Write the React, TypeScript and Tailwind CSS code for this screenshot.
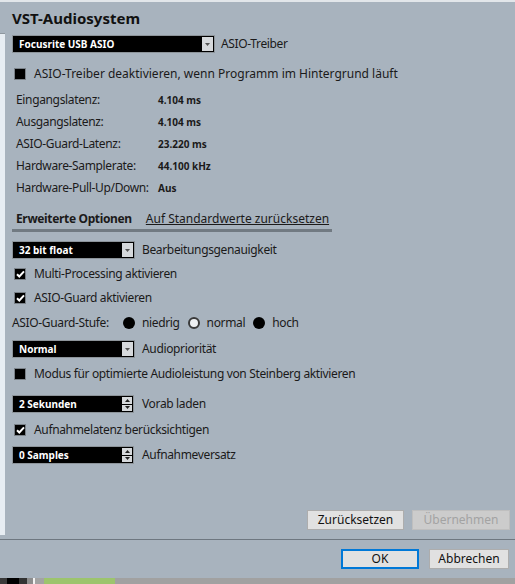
import React from "react";

const font = { fontFamily: '"Noto Sans", "Open Sans", sans-serif' };

function Dropdown({ value, width }: { value: string; width: string }) {
  return (
    <div
      className={`flex h-[18px] ${width} items-stretch border border-[#8d949a] bg-black`}
    >
      <span className="flex flex-1 items-center pl-[6px] text-[10px] font-bold tracking-normal text-white">
        {value}
      </span>
      <span className="my-[1px] mr-[1px] flex w-[11px] items-center justify-center bg-[#d6d9dc]">
        <svg width="5" height="3" viewBox="0 0 5 3">
          <path d="M0 0h5L2.5 3z" fill="#555" />
        </svg>
      </span>
    </div>
  );
}

function Spinbox({ value }: { value: string }) {
  return (
    <div className="flex h-[18px] w-[122px] items-stretch border border-[#8d949a] bg-black">
      <span className="flex flex-1 items-center pl-[6px] text-[10px] font-bold tracking-normal text-white">
        {value}
      </span>
      <span className="my-[1px] mr-[1px] flex w-[10px] flex-col gap-[1px]">
        <span className="flex flex-1 items-center justify-center bg-[#d6d9dc]">
          <svg width="5" height="3" viewBox="0 0 5 3">
            <path d="M0 3h5L2.5 0z" fill="#222" />
          </svg>
        </span>
        <span className="flex flex-1 items-center justify-center bg-[#d6d9dc]">
          <svg width="5" height="3" viewBox="0 0 5 3">
            <path d="M0 0h5L2.5 3z" fill="#222" />
          </svg>
        </span>
      </span>
    </div>
  );
}

function Checkbox({
  checked,
  label,
  wide,
}: {
  checked?: boolean;
  label: string;
  wide?: boolean;
}) {
  return (
    <div className="flex h-[24px] items-center pl-[2px]">
      <span className="flex h-[12px] w-[12px] items-center justify-center border border-[#7a8188] bg-black">
        {checked && (
          <svg width="9" height="8" viewBox="0 0 9 8">
            <path d="M1 4.2l2.3 2.3L8 1.3" stroke="#fff" strokeWidth="2" fill="none" />
          </svg>
        )}
      </span>
      <span className={`ml-[8px] whitespace-nowrap ${wide ? "tracking-normal" : ""}`}>
        {label}
      </span>
    </div>
  );
}

function Radio({ on, label }: { on?: boolean; label: string }) {
  return (
    <span className="flex items-center">
      <span
        className={`h-[12px] w-[12px] rounded-full ${
          on ? "border-[2px] border-[#3a3a3a] bg-[#eef0f2]" : "bg-black"
        }`}
      />
      <span className="ml-[7px]">{label}</span>
    </span>
  );
}

function InfoRow({ label, value }: { label: string; value: string }) {
  return (
    <div className="flex h-[22px] items-center pl-[4px]">
      <span className="w-[142px] whitespace-nowrap">{label}</span>
      <span className="text-[10px] font-bold tracking-normal">{value}</span>
    </div>
  );
}

function Button({
  children,
  width,
  disabled,
  primary,
}: {
  children: React.ReactNode;
  width: string;
  disabled?: boolean;
  primary?: boolean;
}) {
  return (
    <button
      className={`flex h-[20px] ${width} items-center justify-center text-[12px] tracking-normal ${
        disabled
          ? "border border-[#bfbfbf] bg-[#cccccc] text-[#a3a3a3]"
          : primary
            ? "border-2 border-[#0078d7] bg-[#e1e1e1] text-[#111]"
            : "border border-[#adadad] bg-[#e1e1e1] text-[#111]"
      }`}
    >
      {children}
    </button>
  );
}

export default function App() {
  return (
    <div
      className="flex h-[584px] w-[515px] flex-col overflow-hidden bg-[#a8b3be] text-[12px] tracking-[-0.35px] text-[#1b1a1a]"
      style={font}
    >
      <div className="h-[2px] bg-[#e2e6ea]" />
      <div className="flex h-[537px]">
        <div className="flex w-[5px] flex-col">
          <div className="h-[31px]" />
          <div className="h-[1px] bg-[#8e979f]" />
          <div className="flex-1 bg-[#e7edf3]" />
          <div className="h-[4px]" />
        </div>
        <div className="flex flex-1 flex-col pl-[7px]">
          <h1 className="flex h-[32px] items-center pt-[1px] text-[15px] font-bold tracking-normal text-[#111]">
            VST-Audiosystem
          </h1>
          <div className="mt-[1px] flex items-center">
            <Dropdown value="Focusrite USB ASIO" width="w-[203px]" />
            <span className="ml-[6px]">ASIO-Treiber</span>
          </div>
          <div className="mt-[9px]">
            <Checkbox
              wide
              label="ASIO-Treiber deaktivieren, wenn Programm im Hintergrund läuft"
            />
          </div>
          <div className="mt-[3px] flex flex-col">
            <InfoRow label="Eingangslatenz:" value="4.104 ms" />
            <InfoRow label="Ausgangslatenz:" value="4.104 ms" />
            <InfoRow label="ASIO-Guard-Latenz:" value="23.220 ms" />
            <InfoRow label="Hardware-Samplerate:" value="44.100 kHz" />
            <InfoRow label="Hardware-Pull-Up/Down:" value="Aus" />
          </div>
          <div className="mt-[10px] flex w-[320px] flex-col">
            <div className="flex h-[20px] items-center whitespace-nowrap pl-[4px]">
              <span className="font-bold">Erweiterte Optionen</span>
              <span className="ml-[14px] tracking-normal underline">
                Auf Standardwerte zurücksetzen
              </span>
            </div>
            <div className="h-[3px] bg-[#717a82]" />
          </div>
          <div className="mt-[9px] flex items-center">
            <Dropdown value="32 bit float" width="w-[123px]" />
            <span className="ml-[7px]">Bearbeitungsgenauigkeit</span>
          </div>
          <div className="mt-[3px]">
            <Checkbox checked label="Multi-Processing aktivieren" />
            <Checkbox checked label="ASIO-Guard aktivieren" />
          </div>
          <div className="flex h-[26px] items-center gap-[8px]">
            <span className="mr-[6px]">ASIO-Guard-Stufe:</span>
            <Radio label="niedrig" />
            <Radio on label="normal" />
            <Radio label="hoch" />
          </div>
          <div className="mt-[4px] flex items-center">
            <Dropdown value="Normal" width="w-[123px]" />
            <span className="ml-[7px]">Audiopriorität</span>
          </div>
          <div className="mt-[4px]">
            <Checkbox label="Modus für optimierte Audioleistung von Steinberg aktivieren" />
          </div>
          <div className="mt-[9px] flex items-center">
            <Spinbox value="2 Sekunden" />
            <span className="ml-[8px]">Vorab laden</span>
          </div>
          <div className="mt-[5px]">
            <Checkbox checked label="Aufnahmelatenz berücksichtigen" />
          </div>
          <div className="mt-[4px] flex items-center">
            <Spinbox value="0 Samples" />
            <span className="ml-[8px]">Aufnahmeversatz</span>
          </div>
          <div className="flex-1" />
          <div className="flex justify-end gap-[8px] pr-[5px] pb-[9px]">
            <Button width="w-[97px]">Zurücksetzen</Button>
            <Button width="w-[98px]" disabled>
              Übernehmen
            </Button>
          </div>
        </div>
      </div>
      <div className="h-[1px] bg-[#6e7780]" />
      <div className="flex h-[38px] items-start justify-end gap-[10px] pt-[9px] pr-[6px]">
        <Button width="w-[78px]" primary>
          OK
        </Button>
        <Button width="w-[80px]">Abbrechen</Button>
      </div>
      <div className="flex h-[6px] bg-[#9c9c9c]">
        <div className="w-[7px] bg-[#3a3a3a]" />
        <div className="w-[12px] bg-black" />
        <div className="w-[8px] bg-[#333]" />
        <div className="w-[6px] bg-[#8d8d8d]" />
        <div className="w-[2px] bg-[#f2f2f2]" />
        <div className="w-[9px] bg-[#a3a3a3]" />
        <div className="w-[71px] bg-[#9cc46d]" />
        <div className="flex-1 bg-[#a1a1a1]" />
      </div>
    </div>
  );
}
